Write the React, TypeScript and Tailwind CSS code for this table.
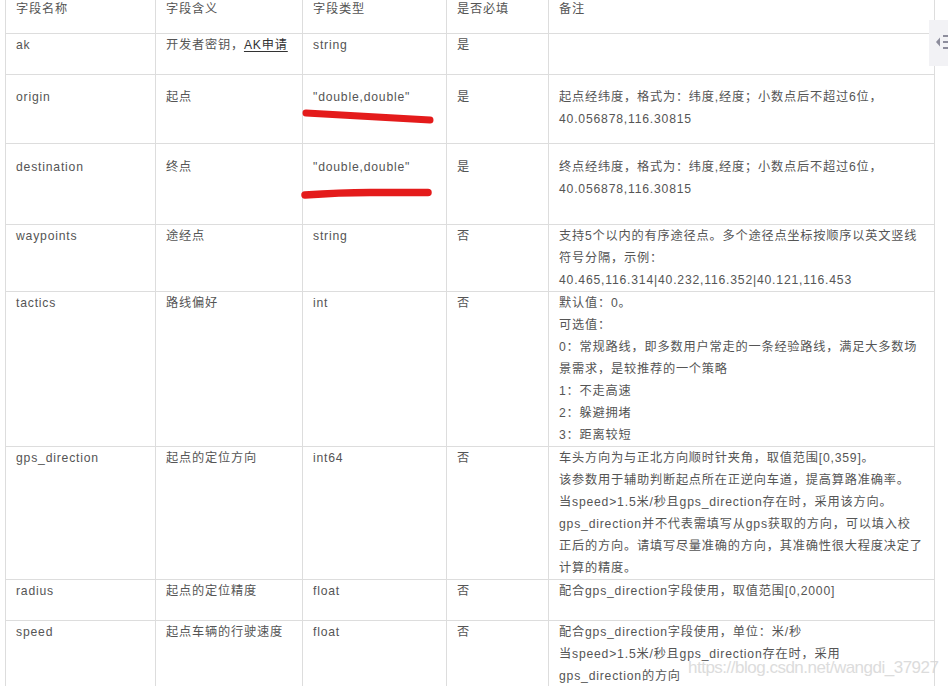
import React from "react";

type Row = {
  name: string;
  meaning: React.ReactNode;
  type: string;
  req: string;
  notes: string[];
  h: string;
  pt: string;
};

const rows: Row[] = [
  { name: "ak", meaning: <>开发者密钥，<span className="text-[#333] underline underline-offset-2">AK申请</span></>, type: "string", req: "是", notes: [], h: "h-[41px]", pt: "pt-0" },
  { name: "origin", meaning: "起点", type: "\"double,double\"", req: "是", notes: ["起点经纬度，格式为：纬度,经度；小数点后不超过6位，", "40.056878,116.30815"], h: "h-[69px]", pt: "pt-[11px]" },
  { name: "destination", meaning: "终点", type: "\"double,double\"", req: "是", notes: ["终点经纬度，格式为：纬度,经度；小数点后不超过6位，", "40.056878,116.30815"], h: "h-[81px]", pt: "pt-[12px]" },
  { name: "waypoints", meaning: "途经点", type: "string", req: "否", notes: ["支持5个以内的有序途径点。多个途径点坐标按顺序以英文竖线", "符号分隔，示例：", "40.465,116.314|40.232,116.352|40.121,116.453"], h: "h-[67px]", pt: "pt-0" },
  { name: "tactics", meaning: "路线偏好", type: "int", req: "否", notes: ["默认值：0。", "可选值：", "0：常规路线，即多数用户常走的一条经验路线，满足大多数场", "景需求，是较推荐的一个策略", "1：不走高速", "2：躲避拥堵", "3：距离较短"], h: "h-[155px]", pt: "pt-0" },
  { name: "gps_direction", meaning: "起点的定位方向", type: "int64", req: "否", notes: ["车头方向为与正北方向顺时针夹角，取值范围[0,359]。", "该参数用于辅助判断起点所在正逆向车道，提高算路准确率。", "当speed>1.5米/秒且gps_direction存在时，采用该方向。", "gps_direction并不代表需填写从gps获取的方向，可以填入校", "正后的方向。请填写尽量准确的方向，其准确性很大程度决定了", "计算的精度。"], h: "h-[133px]", pt: "pt-0" },
  { name: "radius", meaning: "起点的定位精度", type: "float", req: "否", notes: ["配合gps_direction字段使用，取值范围[0,2000]"], h: "h-[41px]", pt: "pt-0" },
  { name: "speed", meaning: "起点车辆的行驶速度", type: "float", req: "否", notes: ["配合gps_direction字段使用，单位：米/秒", "当speed>1.5米/秒且gps_direction存在时，采用", "gps_direction的方向"], h: "h-[90px]", pt: "pt-0" },
];

export default function App() {
  return (
    <div
      className="relative h-[686px] w-[948px] overflow-hidden bg-white text-[12.2px] leading-[22px] tracking-[0.8px] text-[#555555]"
      style={{ fontFamily: '"Liberation Sans", "Noto Sans CJK SC", sans-serif' }}
    >
      <div className="ml-[5px] w-[930px] border-x border-[#dddddd]">
        <div className="flex h-[34px] border-b border-[#dddddd] leading-[18px]">
          <div className="w-[150px] shrink-0 border-r border-[#dddddd] pl-[10px]">字段名称</div>
          <div className="w-[147px] shrink-0 border-r border-[#dddddd] pl-[10px]">字段含义</div>
          <div className="w-[144px] shrink-0 border-r border-[#dddddd] pl-[10px]">字段类型</div>
          <div className="w-[102px] shrink-0 border-r border-[#dddddd] pl-[10px]">是否必填</div>
          <div className="flex-1 pl-[10px]">备注</div>
        </div>
        {rows.map((r) => (
          <div key={r.name} className={`flex border-b border-[#dddddd] ${r.h}`}>
            <div className={`w-[150px] shrink-0 border-r border-[#dddddd] pl-[10px] ${r.pt}`}>{r.name}</div>
            <div className={`w-[147px] shrink-0 border-r border-[#dddddd] pl-[10px] ${r.pt}`}>{r.meaning}</div>
            <div className={`w-[144px] shrink-0 border-r border-[#dddddd] pl-[10px] ${r.pt}`}>{r.type}</div>
            <div className={`w-[102px] shrink-0 border-r border-[#dddddd] pl-[10px] ${r.pt}`}>{r.req}</div>
            <div className={`flex-1 whitespace-nowrap pl-[10px] ${r.pt}`}>
              {r.notes.map((n, i) => (
                <div key={i}>{n}</div>
              ))}
            </div>
          </div>
        ))}
      </div>

      <svg className="pointer-events-none absolute left-0 top-0" width="948" height="686">
        <path d="M306 113 Q 360 116 430 120" stroke="#e41b1b" strokeWidth="7" strokeLinecap="round" fill="none" />
        <path d="M305 195 Q 340 192.5 370 192.5 T 428 192.5" stroke="#e41b1b" strokeWidth="7.5" strokeLinecap="round" fill="none" />
      </svg>

      <div className="absolute left-[929px] top-[20px] h-[46px] w-[19px] bg-[#f2f2f5]">
        <svg width="19" height="46" className="absolute left-0 top-0">
          <polygon points="7,22 11,17.5 11,26.5" fill="#8d8d9c" />
          <rect x="14" y="15" width="5" height="2" fill="#8d8d9c" />
          <rect x="14" y="21" width="5" height="2" fill="#8d8d9c" />
          <rect x="14" y="27" width="5" height="2" fill="#8d8d9c" />
        </svg>
      </div>

      <div
        className="pointer-events-none absolute left-[688px] top-[658px] whitespace-nowrap text-[17px] leading-[20px] tracking-[-0.5px] text-[#d4d4d4] opacity-80"
        style={{ fontFamily: '"Liberation Sans", Arial, sans-serif' }}
      >
        https://blog.csdn.net/wangdi_37927
      </div>
    </div>
  );
}
